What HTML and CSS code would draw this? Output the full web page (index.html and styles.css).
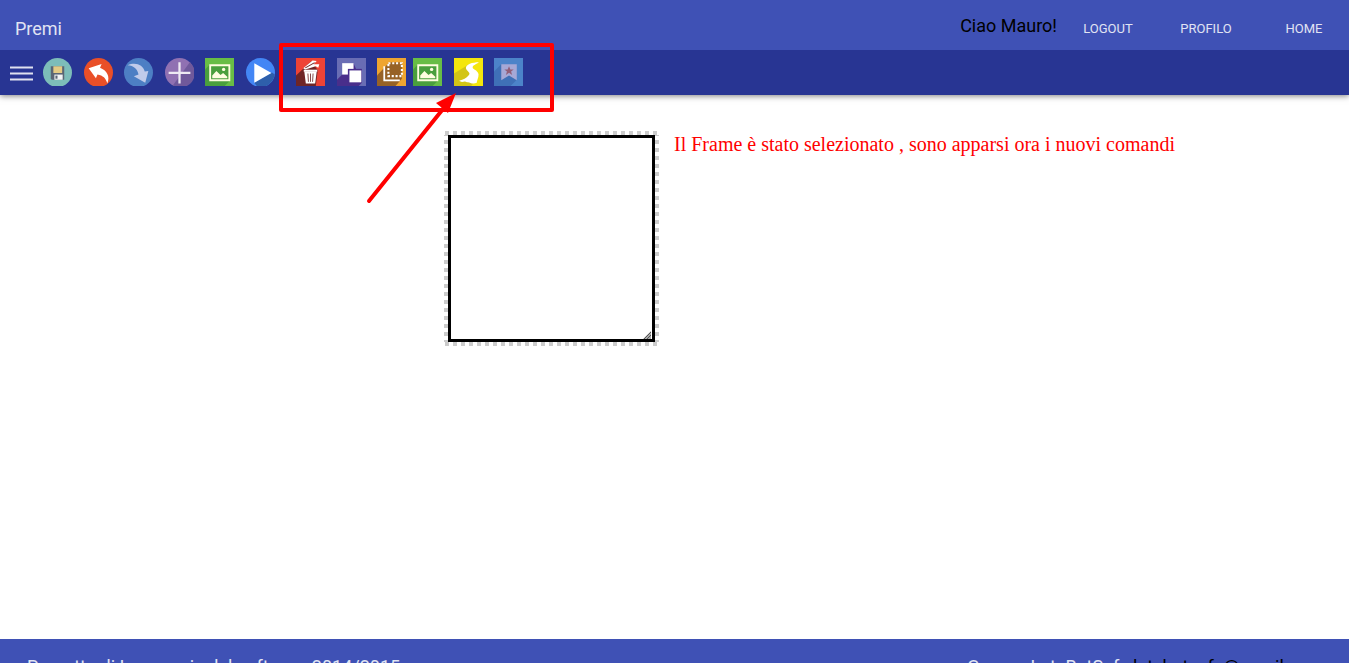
FILE: index.html
```html
<!DOCTYPE html>
<html lang="it">
<head>
<meta charset="utf-8">
<title>Premi</title>
<link rel="stylesheet" href="styles.css">
</head>
<body>
<header class="topbar">
  <h1 class="brand">Premi</h1>
  <span class="greeting">Ciao Mauro!</span>
  <nav class="nav">
    <a class="nav-link" href="#">LOGOUT</a>
    <a class="nav-link" href="#">PROFILO</a>
    <a class="nav-link" href="#">HOME</a>
  </nav>
</header>

<div class="toolbar" role="toolbar" aria-label="Comandi">
  <button class="menu" aria-label="Menu"><svg viewBox="0 0 23 28"><path d="M0 9.500h23M0 15.500h23M0 21.500h23" stroke="#dfe1f0" stroke-width="2.2"/></svg></button>
  <div class="group general">
    <button class="tool" aria-label="Salva"><svg viewBox="0 0 28 28"><circle cx="14" cy="14" r="14" fill="#7dbdb9"/><path d="M7.500 8h13v13h-12l-1-1z" fill="#5b6674"/><path d="M10 8h8.500v6.500H10z" fill="#e4cb84"/><path d="M11 16h8v5h-8z" fill="#f2f4f5"/><path d="M12 17h2v3h-2z" fill="#5b6674"/></svg></button>
    <button class="tool" aria-label="Annulla"><svg viewBox="0 0 28 28"><circle cx="14" cy="14" r="14" fill="#e94f28"/><path d="M4.500 10L17 5.800L15.500 9.500C22 12 25.500 18 22.500 24.500C21 19.500 18.500 17 13 16L11.500 19.500Z" fill="#fff"/></svg></button>
    <button class="tool" aria-label="Ripeti"><svg viewBox="0 0 28 28"><circle cx="14" cy="14" r="14" fill="#4d7fc4"/><path d="M3.500 7C11 3.500 18.500 6.500 20 13L23.500 12.500L20.500 24L9.500 17.500L14 16C13 10.500 9.500 7.500 3.500 7Z" fill="#c0cbea"/></svg></button>
    <button class="tool" aria-label="Aggiungi"><svg viewBox="0 0 28 28"><circle cx="14" cy="14" r="14" fill="#9071b2"/><path d="M24 4A14 14 0 0 1 7.500 26.500Z" fill="#70599b"/><path d="M14 4v20.500M3.500 14.300h21" stroke="#eeeaf3" stroke-width="2.200"/></svg></button>
    <button class="tool" aria-label="Immagine"><svg viewBox="0 0 28 28"><path d="M0 0h28v28H0z" fill="#68bd45"/><path d="M0 11L5 6L24 22L18 28H0z" fill="#4a9f3d"/><path d="M5 7h18.500v14.500H5z" fill="#4a9f3d" stroke="#fffde0" stroke-width="1.800"/><path d="M7 19.500V17l4-4.500 4 4 2.500-2L21.500 18v1.500z" fill="#fffde0"/><circle cx="18" cy="11" r="1.600" fill="#fffde0"/></svg></button>
    <button class="tool" aria-label="Riproduci"><svg viewBox="0 0 28 28"><circle cx="14" cy="14" r="14" fill="#4386f5"/><path d="M25 14L27.800 16A14 14 0 0 1 11 27.700L8 24z" fill="#2e5fab"/><path d="M8 5v19L24.500 14.500z" fill="#fff"/></svg></button>
  </div>
  <div class="group frame-tools">
    <button class="tool" aria-label="Elimina"><svg viewBox="0 0 28 28"><path d="M0 0h28v28H0z" fill="#ee4336"/><path d="M0 17L15 3L21 12L19 28H0z" fill="#6f2526"/><path d="M7 10L16 2.500L20 3L17 6L22.500 6L21.500 9.500L19 8L9 11z" fill="#fff"/><path d="M9 9.500L18 4.500" stroke="#6f2526"/><path d="M7.500 12.300h13" stroke="#fff" stroke-width="2"/><path d="M8 13h12L18.500 24.500h-9z" fill="#fff"/><path d="M11.500 15l.5 8M14 15v8M16.500 15l-.5 8" stroke="#6f2526" stroke-width=".8"/></svg></button>
    <button class="tool" aria-label="Duplica"><svg viewBox="0 0 28 28"><path d="M0 0h28v28H0z" fill="#696db4"/><path d="M5 16L16 5L24 24L20 28H0V21z" fill="#492e8b"/><path d="M5 5h11v11H5z" fill="#fff"/><path d="M10.500 10.500H24v13.500H10.500z" fill="#492e8b"/><path d="M12 12h11.500v11.500H12z" fill="#fff"/></svg></button>
    <button class="tool" aria-label="Cornice"><svg viewBox="0 0 28 28"><path d="M0 0h28v28H0z" fill="#efa530"/><path d="M0 17L12 4L24 4V20L17 28H0z" fill="#976226"/><path d="M7 8v13.500h15" fill="none" stroke="#fff" stroke-width="1.700"/><path d="M11 5h13v12.500H11z" fill="none" stroke="#fff" stroke-width="2" stroke-dasharray="2 1.700"/></svg></button>
  </div>
  <div class="group media-tools">
    <button class="tool" aria-label="Sfondo"><svg viewBox="0 0 28 28"><path d="M0 0h28v28H0z" fill="#68bd45"/><path d="M0 11L5 6L24 22L18 28H0z" fill="#4a9f3d"/><path d="M5 7h18.500v14.500H5z" fill="#4a9f3d" stroke="#fffde0" stroke-width="1.800"/><path d="M7 19.500V17l4-4.500 4 4 2.500-2L21.500 18v1.500z" fill="#fffde0"/><circle cx="18" cy="11" r="1.600" fill="#fffde0"/></svg></button>
    <button class="tool" aria-label="Percorso"><svg viewBox="0 0 28 28"><path d="M0 0h28v28H0z" fill="#f4e60c"/><path d="M0 15L13 7L24 17L16 28H0z" fill="#d3c516"/><path d="M24 4C18 4 11 6 11.500 10C12 13 17 14 14 17C12 19.500 9 21 5 22C8 24.500 10 21.500 12.500 23.500C15 22.500 17 26 22 24C22.500 20 25 17 23 14C21 11 18 11 18 9C18 6.500 22 6 24 4Z" fill="#fff"/></svg></button>
    <button class="tool" aria-label="Segnalibro"><svg viewBox="0 0 28 28"><path d="M0 0h28v28H0z" fill="#4c83c9"/><path d="M0 13L7 6L22 21L15 28H0z" fill="#3f70b7"/><path d="M7 6h15v15.500L14.500 17L7 21.500z" fill="#a6a8d6"/><path d="M14.500 8l1.300 3h3.200l-2.500 2 1 3.300-3-2-3 2 1-3.300-2.500-2h3.200z" fill="#925e78"/></svg></button>
  </div>
</div>

<main class="canvas">
  <div class="selection"><div class="frame"><svg class="grip" viewBox="0 0 8 8"><path d="M0 8L8 0v8z" fill="#aaa"/><path d="M1 8L8 1M4 8l4-4" stroke="#555"/></svg></div></div>
  <p class="note">Il Frame è stato selezionato , sono apparsi ora i nuovi comandi</p>
</main>

<footer class="footer">
  <span>Progetto di Ingegneria del software 2014/2015</span>
  <span>Gruppo LateButSafe <a class="mail" href="#">latebutsafe@gmail.com</a></span>
</footer>

<div class="highlight"></div>
<svg class="arrow" viewBox="0 0 100 120"><path d="M9 111L87 14" stroke="#f00" stroke-width="4" stroke-linecap="round"/><path d="M96 3L76 13L88 23z" fill="#f00"/></svg>
</body>
</html>
```
FILE: styles.css
```css
* { box-sizing: border-box; }
body {
  margin: 0;
  overflow: hidden;
  background: #fff;
  font-family: Roboto, sans-serif;
  font-size: 18px;
  color: #000;
}
.topbar {
  position: relative;
  z-index: 1;
  display: flex;
  height: 50px;
  padding: 2px 1px 0 15px;
  align-items: center;
  background: #3f51b5;
}
.brand {
  margin: 4px auto 0 0;
  font-size: 18px;
  font-weight: 400;
  color: #e1e4f3;
}
.greeting { margin: 0 7px 2px 0; }
.nav {
  display: flex;
  gap: 10px;
  margin-top: 4px;
}
.nav-link {
  width: 88px;
  text-align: center;
  text-decoration: none;
  font-size: 13px;
  color: #e1e4f3;
}
.toolbar {
  display: flex;
  height: 45px;
  padding: 8px 10px;
  align-items: flex-start;
  background: #283593;
  box-shadow: 0 1px 6px rgba(0, 0, 0, .5);
}
.menu, .tool {
  display: block;
  height: 28px;
  padding: 0;
  border: 0;
  overflow: hidden;
  background: none;
}
.menu { width: 23px; margin-right: 10px; }
.menu svg { display: block; width: 23px; height: 28px; }
.tool { width: 29px; }
.tool svg { display: block; width: 29px; height: 29px; }
.group { display: flex; justify-content: space-between; }
.general { width: 232px; margin-right: 21px; }
.frame-tools { width: 110px; margin-right: 7px; }
.media-tools { width: 110px; }
.canvas {
  display: flex;
  gap: 15px;
  align-items: flex-start;
  height: calc(100vh - 119px);
  padding: 36px 16px 0 444px;
}
.selection {
  flex: none;
  padding: 4px;
  background:
    linear-gradient(90deg, #ccc 4px, #fff 4px) 1px 0 / 8px 4px repeat-x,
    linear-gradient(90deg, #ccc 4px, #fff 4px) 1px 100% / 8px 4px repeat-x,
    linear-gradient(#ccc 4px, #fff 4px) 0 1px / 4px 8px repeat-y,
    linear-gradient(#ccc 4px, #fff 4px) 100% 1px / 4px 8px repeat-y;
}
.frame {
  display: flex;
  width: 207px;
  height: 207px;
  align-items: flex-end;
  justify-content: flex-end;
  padding: 0 1px 0 0;
  border: 3px solid #000;
  background: #fff;
}
.grip { width: 8px; height: 8px; }
.note {
  margin: 0;
  font: 20px/26px "Liberation Serif", serif;
  color: #f00;
}
.footer {
  display: flex;
  justify-content: space-between;
  padding: 16px 25px 16px 27px;
  line-height: 24px;
  background: #3f51b5;
  color: #e1e4f3;
}
.mail { color: #000; text-decoration: none; }
.highlight {
  position: absolute;
  z-index: 2;
  top: 43px;
  left: 279px;
  width: 275px;
  height: 69px;
  border: 4px solid #f00;
  border-radius: 2px;
  pointer-events: none;
}
.arrow {
  position: absolute;
  z-index: 2;
  top: 90px;
  left: 360px;
  width: 100px;
  height: 120px;
  pointer-events: none;
}
```
